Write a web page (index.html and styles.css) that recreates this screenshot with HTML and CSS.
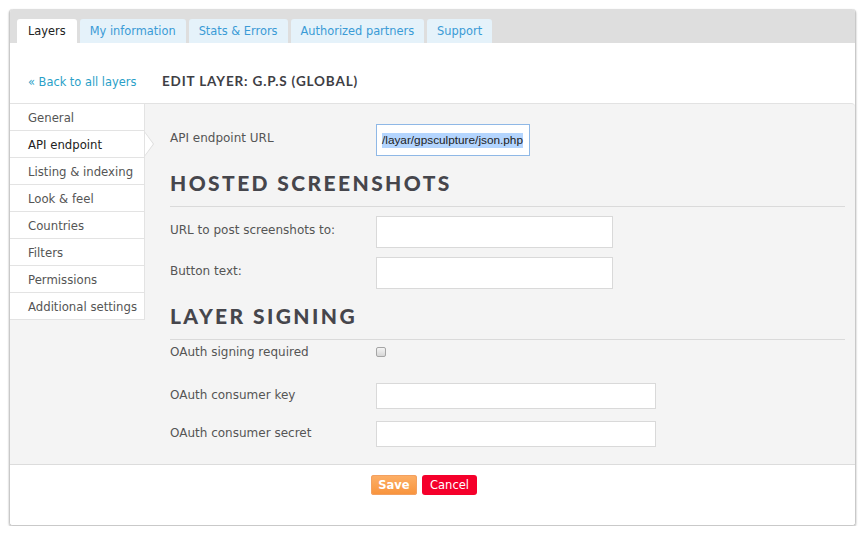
FILE: index.html
```html
<!DOCTYPE html>
<html>
<head>
<meta charset="utf-8">
<link rel="stylesheet" href="styles.css">
</head>
<body>
<div class="page">
  <div class="tabbar">
    <a class="tab active">Layers</a>
    <a class="tab">My information</a>
    <a class="tab">Stats &amp; Errors</a>
    <a class="tab">Authorized partners</a>
    <a class="tab">Support</a>
  </div>
  <div class="header">
    <a class="back">« Back to all layers</a>
    <h1 class="title">EDIT LAYER: G.P.S (GLOBAL)</h1>
  </div>
  <div class="main">
    <ul class="sidebar">
      <li>General</li>
      <li class="current">API endpoint</li>
      <li>Listing &amp; indexing</li>
      <li>Look &amp; feel</li>
      <li>Countries</li>
      <li>Filters</li>
      <li>Permissions</li>
      <li>Additional settings</li>
    </ul>
    <div class="form">
      <div class="row first">
        <label class="label">API endpoint URL</label>
        <div class="input focus w154"><span class="sel">/layar/gpsculpture/json.php</span></div>
      </div>
      <h2 class="section">HOSTED SCREENSHOTS</h2>
      <div class="row r2">
        <label class="label">URL to post screenshots to:</label>
        <div class="input w237 tall"></div>
      </div>
      <div class="row r3">
        <label class="label">Button text:</label>
        <div class="input w237 tall"></div>
      </div>
      <h2 class="section">LAYER SIGNING</h2>
      <div class="row check">
        <label class="label">OAuth signing required</label>
        <input type="checkbox" class="cb">
      </div>
      <div class="row key">
        <label class="label">OAuth consumer key</label>
        <div class="input w280 short"></div>
      </div>
      <div class="row secret">
        <label class="label">OAuth consumer secret</label>
        <div class="input w280 short"></div>
      </div>
    </div>
  </div>
  <div class="footer">
    <button class="btn save">Save</button>
    <button class="btn cancel">Cancel</button>
  </div>
</div>
</body>
</html>
```
FILE: styles.css
```css
* { box-sizing: border-box; }
html, body { margin: 0; padding: 0; background: #fff; }
body { font-family: "DejaVu Sans", Verdana, sans-serif; font-size: 11.7px; color: #555; }

.page {
  margin: 9px 0 0 9px;
  width: 847px;
  height: 517px;
  border: 1px solid #c9c9c9;
  border-top: none;
  border-radius: 4px;
  box-shadow: 0 1px 2px rgba(0,0,0,0.35);
  display: flex;
  flex-direction: column;
  overflow: hidden;
}

.tabbar {
  background: #dedede;
  height: 34px;
  padding: 10px 0 0 8px;
  display: flex;
  gap: 2px;
  border-radius: 4px 4px 0 0;
  margin: 0 -1px;
}
.tab {
  height: 24px;
  line-height: 25px;
  padding: 0 10px;
  font-size: 11.4px;
  background: #e5f2fa;
  color: #3a9bd6;
  border-radius: 3px 3px 0 0;
  white-space: nowrap;
  margin-right: 1px;
}
.tab.active { background: #fff; color: #222; padding: 0 11px; }

.header {
  height: 60px;
  display: flex;
  align-items: flex-start;
  padding: 31px 0 0 18px;
  background: #fff;
}
.back { color: #2a9fc8; width: 134px; line-height: 14px; padding-top: 1px; font-size: 11.4px; }
.title {
  margin: 0;
  font-family: Lato, "DejaVu Sans", sans-serif;
  font-weight: 700;
  font-size: 13.5px;
  letter-spacing: 0.85px;
  line-height: 14px;
  color: #3e3e44;
}

.main {
  display: flex;
  background: #f4f4f4;
  border-top: 1px solid #e2e2e2;
  border-bottom: 1px solid #dcdcdc;
  border-top-right-radius: 4px;
}
.sidebar {
  list-style: none;
  margin: 0;
  padding: 0;
  width: 135px;
  align-self: flex-start;
}
.sidebar li {
  height: 27px;
  line-height: 28px;
  padding-left: 18px;
  background: #fff;
  border-bottom: 1px solid #e3e3e3;
  border-right: 1px solid #e3e3e3;
  color: #555;
  position: relative;
  white-space: nowrap;
}
.sidebar li.current { color: #222; }
.sidebar li.current::before {
  content: "";
  position: absolute;
  right: -10px;
  top: 1px;
  border-left: 9px solid #dcdcdc;
  border-top: 12px solid transparent;
  border-bottom: 12px solid transparent;
}
.sidebar li.current::after {
  content: "";
  position: absolute;
  right: -9px;
  top: 2px;
  border-left: 8px solid #fff;
  border-top: 11px solid transparent;
  border-bottom: 11px solid transparent;
}

.form {
  flex: 1;
  padding: 20px 10px 17px 25px;
}
.row { display: flex; align-items: flex-start; }
.label { width: 206px; line-height: 14px; padding-top: 7px; color: #555; font-size: 12px; white-space: nowrap; }
.input {
  background: #fff;
  border: 1px solid #d9d9d9;
  height: 32px;
}
.input.short { height: 26px; }
.w154 { width: 154px; }
.w237 { width: 237px; }
.w280 { width: 280px; }
.input.focus {
  border-color: #8fb8e6;
  display: flex;
  align-items: center;
  padding: 0 0 0 5px;
  overflow: hidden;
  white-space: nowrap;
  font-family: "Liberation Sans", Arial, sans-serif;
  font-size: 11.8px;
  color: #222;
}
.sel { background: #b4d5fe; line-height: 15px; }

.section {
  margin: 14px 0 0 0;
  padding-bottom: 10px;
  border-bottom: 1px solid #dadada;
  font-family: Lato, "DejaVu Sans", sans-serif;
  font-weight: 900;
  font-size: 21px;
  line-height: 26px;
  letter-spacing: 2.4px;
  color: #46464c;
}
.r2 { margin-top: 9px; }
.r3 { margin-top: 9px; }
.row.check { margin-top: 4px; }
.row.check .label { padding-top: 1px; }
.cb {
  -webkit-appearance: none;
  appearance: none;
  margin: 3px 0 0 0;
  width: 10px;
  height: 10px;
  border: 1px solid #a5a5a5;
  border-radius: 2px;
  background: linear-gradient(#f4f4f4, #d6d6d6);
}
.row.key { margin-top: 24px; }
.row.secret { margin-top: 12px; }
.row.key .label, .row.secret .label { padding-top: 5px; }

.footer {
  flex: 1;
  background: #fff;
  padding: 10px 0 0 361px;
  display: flex;
  align-items: flex-start;
  gap: 5px;
}
.btn {
  font-family: "DejaVu Sans", Verdana, sans-serif;
  font-size: 11.5px;
  font-weight: 700;
  color: #fff;
  height: 20px;
  border: none;
  border-radius: 3px;
  padding: 0;
  cursor: pointer;
}
.save {
  width: 46px;
  background: linear-gradient(#fdb068, #f8933b);
  box-shadow: 0 0 0 1px #f3a060 inset;
}
.cancel {
  width: 55px;
  background: #f5002b;
  font-weight: 400;
}
```
